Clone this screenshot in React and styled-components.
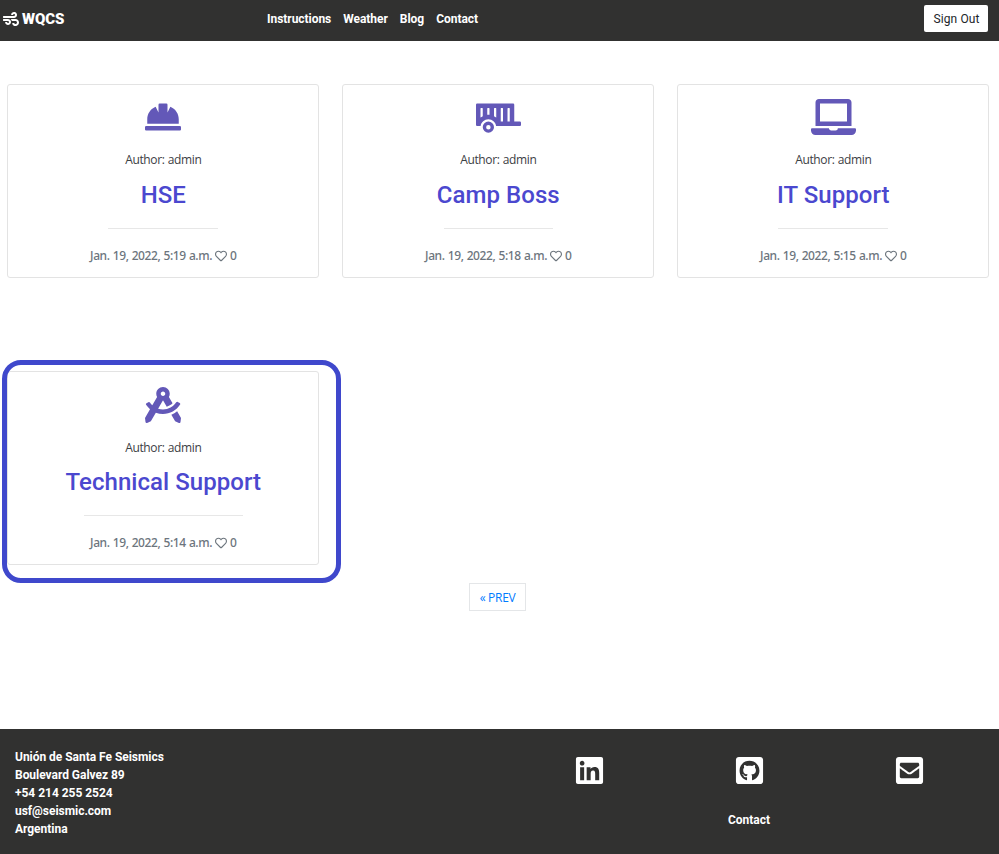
import React from "react";
import styled, { createGlobalStyle } from "styled-components";
import {
  FaWind,
  FaHardHat,
  FaTrailer,
  FaLaptop,
  FaDraftingCompass,
  FaRegHeart,
  FaLinkedin,
  FaGithubSquare,
  FaEnvelopeSquare,
} from "react-icons/fa";

const GlobalStyle = createGlobalStyle`
  *, *::before, *::after { box-sizing: border-box; }
  body {
    margin: 0;
    background: #fff;
    color: #212529;
    font-family: Roboto, "Liberation Sans", sans-serif;
    font-size: 12px;
    line-height: 18px;
  }
  a { color: inherit; text-decoration: none; }
  svg { display: block; }
`;

const Page = styled.div`
  display: flex;
  flex-direction: column;
  min-height: 854px;
`;

const Navbar = styled.header`
  display: flex;
  align-items: center;
  height: 41px;
  padding: 0 11px 4px 3px;
  background: #313130;
  color: #fff;
  font-weight: 700;
`;

const Brand = styled.a`
  display: flex;
  align-items: center;
  gap: 3px;
  width: 264px;
  font-size: 15px;
  font-weight: 900;
  letter-spacing: -0.05px;
`;

const NavLinks = styled.nav`
  display: flex;
  flex: 1;
  gap: 12px;
  letter-spacing: -0.04px;
`;

const SignOut = styled.button`
  width: 64px;
  height: 27px;
  padding: 1px 0 0 1px;
  border: 0;
  border-radius: 2px;
  background: #fff;
  color: #212529;
  font: 400 12px/26px Roboto, sans-serif;
  letter-spacing: 0.1px;
`;

const Posts = styled.main`
  display: grid;
  grid-template-columns: repeat(3, 312px);
  column-gap: 23px;
  row-gap: 93.4px;
  padding: 43px 0 0 7px;
`;

const Slot = styled.div`
  position: relative;
`;

const Highlight = styled.div`
  position: absolute;
  top: -11px;
  left: -5px;
  width: 339px;
  height: 223px;
  border: 5px solid #3f48cc;
  border-radius: 19px;
`;

const Card = styled.article`
  display: flex;
  flex-direction: column;
  align-items: center;
  height: 194px;
  padding: 14.2px 0 0 0.6px;
  border: 1px solid #e3e3e3;
  border-radius: 3px;
`;

const CardIcon = styled.div`
  color: #6358b8;

  svg {
    width: ${(p) => p.$width}px;
    height: 36px;
  }
`;

const Author = styled.p`
  margin: 16.1px 0 0;
  font: 400 12px/18px "Open Sans", sans-serif;
  letter-spacing: -0.36px;
  word-spacing: 0.4px;
  color: #3c4044;
`;

const Title = styled.h2`
  margin: 10.7px 0 0;
  color: #4b48cf;
  font-weight: 500;
  font-size: 24px;
  line-height: 31px;
  letter-spacing: 0.05px;
`;

const Rule = styled.hr`
  width: ${(p) => p.$width}px;
  height: 1px;
  margin: 17px 0 0;
  border: 0;
  background: #e7e7e7;
`;

const Meta = styled.p`
  display: flex;
  align-items: center;
  gap: 3px;
  margin: 18px 0 0;
  color: #6c757d;
  font: 500 12px/18px "Noto Sans", sans-serif;
  letter-spacing: -0.4px;
  word-spacing: 0.4px;
  white-space: nowrap;
`;

const Pagination = styled.nav`
  display: flex;
  justify-content: center;
  margin-top: 17.6px;
  padding-right: 4px;
`;

const PageLink = styled.a`
  width: 57px;
  height: 28px;
  border: 1px solid #e4e6e8;
  color: #007bff;
  font: 400 12px/27px "Open Sans", sans-serif;
  letter-spacing: -0.3px;
  text-align: center;
`;

const Footer = styled.footer`
  display: flex;
  justify-content: space-between;
  height: 125px;
  margin-top: auto;
  padding: 19px 10px 0 15px;
  background: #313130;
  color: #fff;
  font-weight: 700;
`;

const Address = styled.address`
  font-style: normal;
  letter-spacing: -0.03px;
`;

const FooterLinks = styled.div`
  display: grid;
  grid-template-columns: repeat(3, 160px);
  grid-template-rows: 45px 18px;
  row-gap: 11px;
  justify-items: center;
  padding-top: 7px;
`;

const FooterContact = styled.a`
  grid-column: 2;
`;

const posts = [
  { title: "HSE", time: "5:19", icon: FaHardHat, iconWidth: 36, width: 110 },
  { title: "Camp Boss", time: "5:18", icon: FaTrailer, iconWidth: 45, width: 109 },
  { title: "IT Support", time: "5:15", icon: FaLaptop, iconWidth: 45, width: 110 },
  { title: "Technical Support", time: "5:14", icon: FaDraftingCompass, iconWidth: 36, width: 159, highlighted: true },
];

function Post({ post }) {
  const Icon = post.icon;
  return (
    <Slot>
      <Card>
        <CardIcon $width={post.iconWidth}><Icon /></CardIcon>
        <Author>Author: admin</Author>
        <Title>{post.title}</Title>
        <Rule $width={post.width} />
        <Meta>
          <span>Jan. 19, 2022, {post.time} a.m.</span>
          <FaRegHeart size={12} />
          <span>0</span>
        </Meta>
      </Card>
      {post.highlighted && <Highlight />}
    </Slot>
  );
}

export default function App() {
  return (
    <Page>
      <GlobalStyle />
      <Navbar>
        <Brand href="#"><FaWind size={16} />WQCS</Brand>
        <NavLinks>
          <a href="#">Instructions</a>
          <a href="#">Weather</a>
          <a href="#">Blog</a>
          <a href="#">Contact</a>
        </NavLinks>
        <SignOut>Sign Out</SignOut>
      </Navbar>
      <Posts>
        {posts.map((post) => <Post key={post.title} post={post} />)}
      </Posts>
      <Pagination><PageLink href="#">« PREV</PageLink></Pagination>
      <Footer>
        <Address>
          Unión de Santa Fe Seismics<br />
          Boulevard Galvez 89<br />
          +54 214 255 2524<br />
          usf@seismic.com<br />
          Argentina
        </Address>
        <FooterLinks>
          <FaLinkedin size={31} />
          <FaGithubSquare size={31} />
          <FaEnvelopeSquare size={31} />
          <FooterContact href="#">Contact</FooterContact>
        </FooterLinks>
      </Footer>
    </Page>
  );
}
